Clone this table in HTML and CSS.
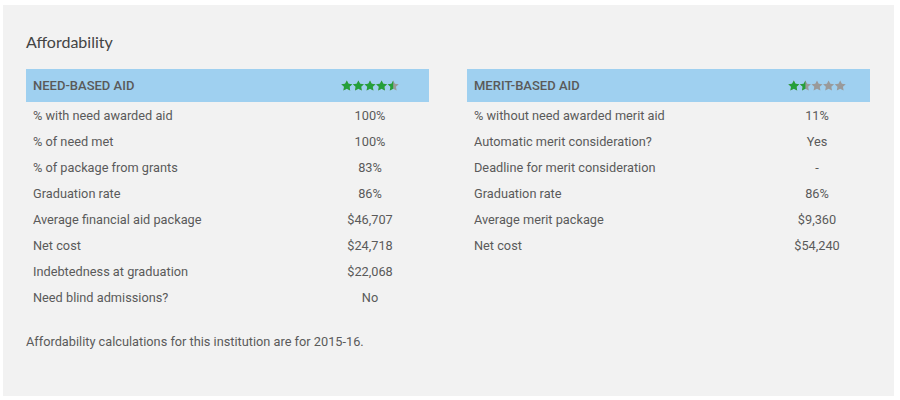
FILE: index.html
```html
<!DOCTYPE html>
<html lang="en">
<head>
<meta charset="utf-8">
<title>Affordability</title>
<link rel="stylesheet" href="styles.css">
</head>
<body>
<svg width="0" height="0" class="defs" aria-hidden="true">
  <defs>
    <polygon id="star" points="6,0.5 7.76,4.07 11.71,4.65 8.85,7.43 9.53,11.35 6,9.5 2.47,11.35 3.15,7.43 0.29,4.65 4.24,4.07"/>
    <g id="five">
      <use href="#star" x="0"/>
      <use href="#star" x="12"/>
      <use href="#star" x="24"/>
      <use href="#star" x="36"/>
      <use href="#star" x="48"/>
    </g>
    <clipPath id="clip-need"><rect x="0" y="0" width="54" height="12"/></clipPath>
    <clipPath id="clip-merit"><rect x="0" y="0" width="18" height="12"/></clipPath>
  </defs>
</svg>
<section class="panel">
  <h2 class="title">Affordability</h2>
  <div class="tables">
    <div class="aid need">
      <div class="head">
        <span class="label">NEED-BASED AID</span>
        <span class="value">
          <svg class="stars" width="58" height="11" viewBox="0 0 60 12" preserveAspectRatio="none">
            <use href="#five" class="off"/>
            <use href="#five" class="on" clip-path="url(#clip-need)"/>
          </svg>
        </span>
      </div>
      <div class="row"><span class="label">% with need awarded aid</span><span class="value">100%</span></div>
      <div class="row"><span class="label">% of need met</span><span class="value">100%</span></div>
      <div class="row"><span class="label">% of package from grants</span><span class="value">83%</span></div>
      <div class="row"><span class="label">Graduation rate</span><span class="value">86%</span></div>
      <div class="row"><span class="label">Average financial aid package</span><span class="value">$46,707</span></div>
      <div class="row"><span class="label">Net cost</span><span class="value">$24,718</span></div>
      <div class="row"><span class="label">Indebtedness at graduation</span><span class="value">$22,068</span></div>
      <div class="row"><span class="label">Need blind admissions?</span><span class="value">No</span></div>
    </div>
    <div class="aid merit">
      <div class="head">
        <span class="label">MERIT-BASED AID</span>
        <span class="value">
          <svg class="stars" width="58" height="11" viewBox="0 0 60 12" preserveAspectRatio="none">
            <use href="#five" class="off"/>
            <use href="#five" class="on" clip-path="url(#clip-merit)"/>
          </svg>
        </span>
      </div>
      <div class="row"><span class="label">% without need awarded merit aid</span><span class="value">11%</span></div>
      <div class="row"><span class="label">Automatic merit consideration?</span><span class="value">Yes</span></div>
      <div class="row"><span class="label">Deadline for merit consideration</span><span class="value">-</span></div>
      <div class="row"><span class="label">Graduation rate</span><span class="value">86%</span></div>
      <div class="row"><span class="label">Average merit package</span><span class="value">$9,360</span></div>
      <div class="row"><span class="label">Net cost</span><span class="value">$54,240</span></div>
    </div>
  </div>
  <p class="note">Affordability calculations for this institution are for 2015-16.</p>
</section>
</body>
</html>
```
FILE: styles.css
```css
html, body {
  margin: 0;
  padding: 0;
  background: #ffffff;
}

.defs {
  position: absolute;
  width: 0;
  height: 0;
  overflow: hidden;
}

.panel {
  box-sizing: border-box;
  width: 891px;
  height: 391px;
  margin: 5px 0 0 3px;
  padding: 27px 23px 0;
  background: #f2f2f2;
  font-family: Roboto, "Liberation Sans", sans-serif;
  color: #5a5a5a;
}

.title {
  margin: 0;
  font-family: Lato, "Open Sans", sans-serif;
  font-weight: 400;
  font-size: 16px;
  line-height: 20px;
  color: #444444;
}

.tables {
  display: grid;
  grid-template-columns: 403px 403px;
  column-gap: 38px;
  margin-top: 17px;
  align-items: start;
}

.aid {
  display: grid;
}

.need .head,
.need .row {
  grid-template-columns: 1fr 118px;
}

.merit .head,
.merit .row {
  grid-template-columns: 1fr 106px;
}

.head,
.row {
  display: grid;
  align-items: center;
  font-size: 12.75px;
}

.head {
  height: 33px;
  background: #9fd0f0;
  font-size: 13px;
  font-weight: 500;
  color: #5a5a5a;
}

.row {
  height: 26px;
}

.label {
  padding-left: 7px;
}

.value {
  text-align: center;
}

.head .value {
  display: flex;
  justify-content: center;
}

.stars {
  display: block;
}

.stars .off {
  fill: #9a9a9a;
}

.stars .on {
  fill: #24a03a;
}

.note {
  margin: 22px 0 0;
  font-size: 12.75px;
  line-height: 20px;
  color: #5a5a5a;
}
```
